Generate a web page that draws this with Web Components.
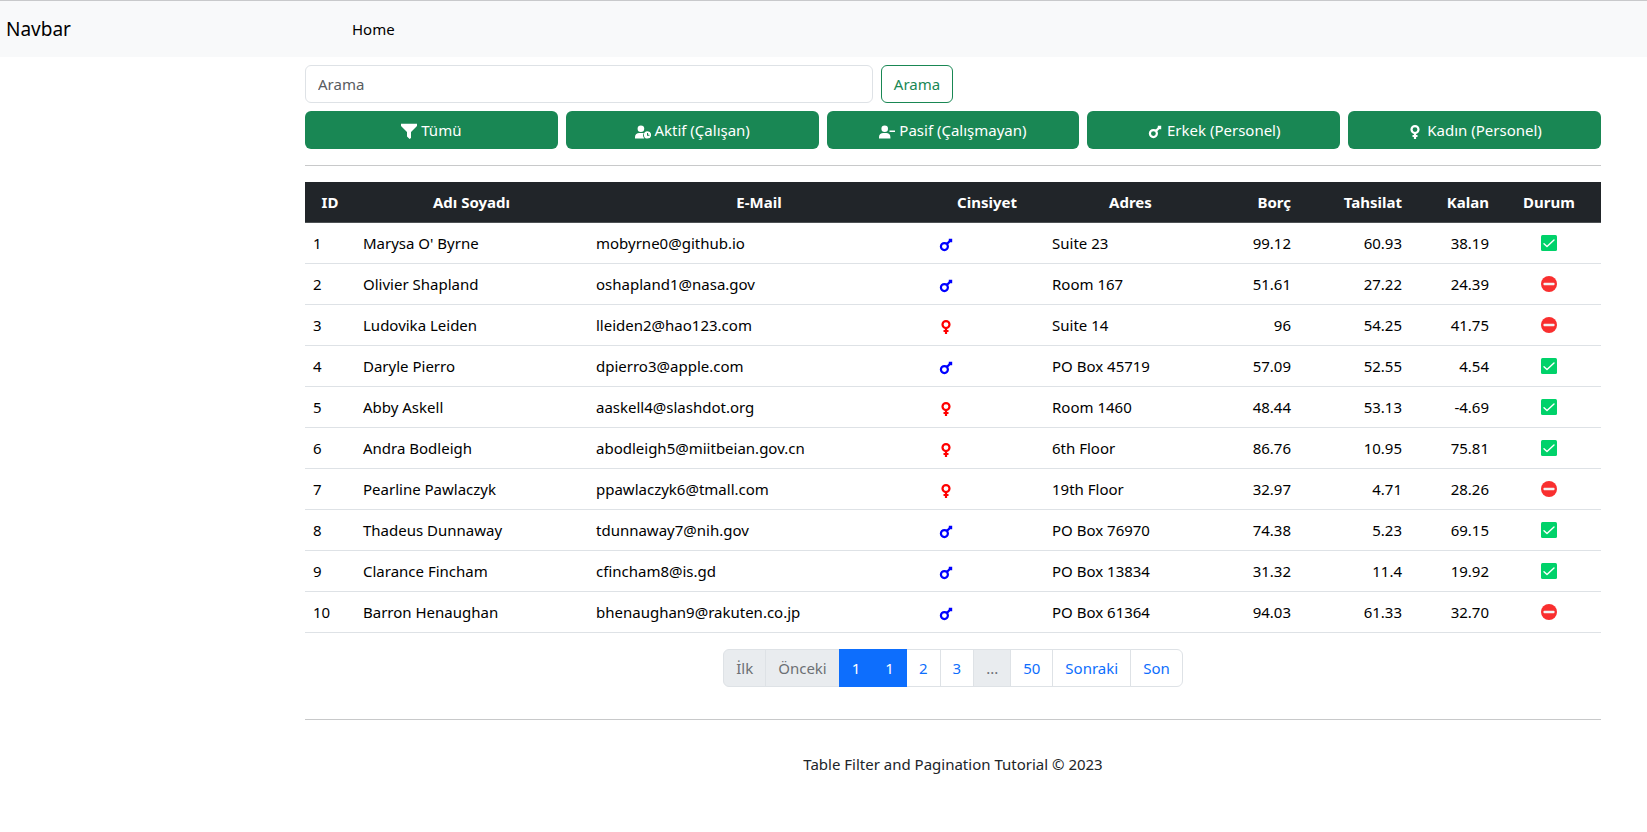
<!DOCTYPE html>
<html lang="tr">
<head>
<meta charset="utf-8">
<meta name="viewport" content="width=device-width, initial-scale=1">
<title>Table Filter and Pagination</title>
<style>
body { margin: 0; background: #fff; color: #212529; font: 15px/24px "Noto Sans", "Open Sans", sans-serif; }
</style>
</head>
<body>
<demo-app></demo-app>
<script>
const define = (name, render) => customElements.define(name, class extends HTMLElement {
  connectedCallback() {
    if (this.shadowRoot) return;
    this.attachShadow({ mode: "open" }).innerHTML = render(this);
  }
});

const ICONS = {
  filter: '<path d="M0 .7h16v2.200L10 9v5.900L8.600 16L6 13.600V9L0 2.900z"/>',
  active: '<circle cx="5.900" cy="5.700" r="3.300"/><path d="M0 15.500v-1.600C0 11.300 2 10 4.200 10h3.600c.4 0 .7 0 1 .1A4.600 4.600 0 0 0 9.300 15.500z"/><path fill-rule="evenodd" d="M12.500 8.300a3.600 3.600 0 1 0 0 7.200a3.600 3.600 0 0 0 0-7.200zM12 10h1.100v1.700h1.300v1.100H12z"/>',
  passive: '<circle cx="5.700" cy="5.700" r="3.300"/><path d="M0 15.500v-1.600C0 11.300 2 10 4.200 10h3c2.400 0 4.200 1.300 4.200 3.900V15.500zM10.500 7.500H16v1.600h-5.500z"/>',
  male: '<path fill="none" stroke="currentColor" stroke-width="2.200" d="M9.900 10.600a3.500 3.500 0 1 1-7 0a3.500 3.500 0 1 1 7 0zM8.900 8L12.500 4.400"/><path d="M10.800 2.800H14.200V6.300H12.600L10.800 5z"/>',
  female: '<path fill="none" stroke="currentColor" stroke-width="2.200" d="M11.500 6.600a3.500 3.500 0 1 1-7 0a3.500 3.500 0 1 1 7 0zM8 10.100V16M5.500 13h5"/>',
  yes: '<rect width="16" height="16" rx="1.500" fill="#00d26a"/><path fill="none" stroke="#fff" stroke-width="1.400" stroke-linecap="round" stroke-linejoin="round" d="M3 8.800L6 11.600L13 4.900"/>',
  no: '<circle cx="8" cy="8" r="8" fill="#f92f2f"/><rect x="2.500" y="6.700" width="11" height="2.600" rx=".8" fill="#f4f4f4"/>'
};

define("glyph-icon", el => `
<style>
:host { display: inline-block; width: 16px; height: 16px; vertical-align: -3px; }
svg { display: block; width: 100%; height: 100%; fill: currentColor; }
</style>
<svg viewBox="0 0 16 16" role="img" aria-label="${el.getAttribute("name")}">${ICONS[el.getAttribute("name")]}</svg>`);

define("nav-bar", () => `
<style>
:host { display: block; border-top: 1px solid #c8c9cb; background: #f8f9fa; }
nav { display: flex; align-items: center; padding: 16px 0; }
a { color: #000; text-decoration: none; }
.brand { box-sizing: border-box; width: 305px; padding-left: 6px; font-size: 19px; }
.link { padding-left: 47px; }
</style>
<nav><a class="brand" href="#">Navbar</a><a class="link" href="#">Home</a></nav>`);

define("search-form", () => `
<style>
:host { display: block; width: 50%; }
form { display: flex; gap: 8px; }
input, button { box-sizing: border-box; height: 38px; border-radius: 6px; font: inherit; background: #fff; }
input { flex: 1; min-width: 0; padding: 6px 12px; border: 1px solid #dee2e6; color: #212529; }
input::placeholder { color: #595c5f; opacity: 1; }
button { flex: none; width: 72px; padding: 0; border: 1px solid #198754; color: #198754; }
</style>
<form><input type="search" placeholder="Arama" aria-label="Arama"><button type="button">Arama</button></form>`);

define("filter-button", el => `
<style>
:host { display: block; }
button { display: block; width: 100%; height: 38px; padding: 0; border: 0; border-radius: 6px; background: #198754; color: #fff; font: inherit; }
</style>
<button type="button"><glyph-icon name="${el.getAttribute("icon")}"></glyph-icon> <slot></slot></button>`);

define("filter-bar", () => `
<style>
:host { display: grid; grid-template-columns: repeat(5, 1fr); gap: 8px; padding: 8px 0 16px; border-bottom: 1px solid #c8c9ca; }
</style>
<filter-button icon="filter">Tümü</filter-button>
<filter-button icon="active">Aktif (Çalışan)</filter-button>
<filter-button icon="passive">Pasif (Çalışmayan)</filter-button>
<filter-button icon="male">Erkek (Personel)</filter-button>
<filter-button icon="female">Kadın (Personel)</filter-button>`);

const PEOPLE = [
  [1, "Marysa O' Byrne", "mobyrne0@github.io", "male", "Suite 23", "99.12", "60.93", "38.19", "yes"],
  [2, "Olivier Shapland", "oshapland1@nasa.gov", "male", "Room 167", "51.61", "27.22", "24.39", "no"],
  [3, "Ludovika Leiden", "lleiden2@hao123.com", "female", "Suite 14", "96", "54.25", "41.75", "no"],
  [4, "Daryle Pierro", "dpierro3@apple.com", "male", "PO Box 45719", "57.09", "52.55", "4.54", "yes"],
  [5, "Abby Askell", "aaskell4@slashdot.org", "female", "Room 1460", "48.44", "53.13", "-4.69", "yes"],
  [6, "Andra Bodleigh", "abodleigh5@miitbeian.gov.cn", "female", "6th Floor", "86.76", "10.95", "75.81", "yes"],
  [7, "Pearline Pawlaczyk", "ppawlaczyk6@tmall.com", "female", "19th Floor", "32.97", "4.71", "28.26", "no"],
  [8, "Thadeus Dunnaway", "tdunnaway7@nih.gov", "male", "PO Box 76970", "74.38", "5.23", "69.15", "yes"],
  [9, "Clarance Fincham", "cfincham8@is.gd", "male", "PO Box 13834", "31.32", "11.4", "19.92", "yes"],
  [10, "Barron Henaughan", "bhenaughan9@rakuten.co.jp", "male", "PO Box 61364", "94.03", "61.33", "32.70", "no"]
];
const COLUMNS = [["ID", 50], ["Adı Soyadı", 233], ["E-Mail", 342], ["Cinsiyet", 114], ["Adres", 173], ["Borç", 82, "num"], ["Tahsilat", 111, "num"], ["Kalan", 87, "num"], ["Durum", 104]];
const TOTAL = COLUMNS.reduce((sum, c) => sum + c[1], 0);

define("people-table", () => `
<style>
:host { display: block; }
table { width: 100%; table-layout: fixed; border-collapse: separate; border-spacing: 0; color: #000; }
th, td { box-sizing: border-box; height: 41px; padding: 8px; line-height: 24px; border-bottom: 1px solid #dee2e6; white-space: nowrap; }
td { text-align: left; }
th { background: #212529; color: #fff; border-color: #4d5154; font-weight: 700; text-align: center; }
.num { text-align: right; }
.state { text-align: center; }
.state glyph-icon { vertical-align: -2px; }
.male { color: #00f; }
.female { color: #f00; }
</style>
<table>
<colgroup>${COLUMNS.map(c => `<col style="width:${c[1] / TOTAL * 100}%">`).join("")}</colgroup>
<thead><tr>${COLUMNS.map(c => `<th scope="col" class="${c[2] || ""}">${c[0]}</th>`).join("")}</tr></thead>
<tbody>${PEOPLE.map(p => `<tr><td>${p[0]}</td><td>${p[1]}</td><td>${p[2]}</td><td class="${p[3]}"><glyph-icon name="${p[3]}"></glyph-icon></td><td>${p[4]}</td><td class="num">${p[5]}</td><td class="num">${p[6]}</td><td class="num">${p[7]}</td><td class="state"><glyph-icon name="${p[8]}"></glyph-icon></td></tr>`).join("")}</tbody>
</table>`);

define("page-links", () => `
<style>
:host { display: block; }
ul { display: flex; justify-content: center; margin: 0; padding: 0; list-style: none; }
li + li { margin-left: -1px; }
a { display: block; padding: 6px 12px; border: 1px solid #dee2e6; color: #0d6efd; background: #fff; text-decoration: none; }
.off a { color: #6c7074; background: #e9ecef; }
.on a { position: relative; color: #fff; background: #0d6efd; border-color: #0d6efd; }
li:first-child a { border-radius: 6px 0 0 6px; }
li:last-child a { border-radius: 0 6px 6px 0; }
</style>
<nav aria-label="Sayfalar"><ul>
<li class="off"><a href="#">İlk</a></li><li class="off"><a href="#">Önceki</a></li>
<li class="on"><a href="#">1</a></li><li class="on"><a href="#">1</a></li>
<li><a href="#">2</a></li><li><a href="#">3</a></li><li class="off"><a href="#">...</a></li>
<li><a href="#">50</a></li><li><a href="#">Sonraki</a></li><li><a href="#">Son</a></li>
</ul></nav>`);

define("demo-app", () => `
<style>
:host { display: block; }
main { margin: 8px 46px 0 305px; }
people-table, page-links { margin-top: 16px; }
footer { margin-top: 32px; padding: 32px 0; border-top: 1px solid #c8c9ca; text-align: center; }
</style>
<nav-bar></nav-bar>
<main>
<search-form></search-form>
<filter-bar></filter-bar>
<people-table></people-table>
<page-links></page-links>
<footer>Table Filter and Pagination Tutorial © 2023</footer>
</main>`);
</script>
</body>
</html>
